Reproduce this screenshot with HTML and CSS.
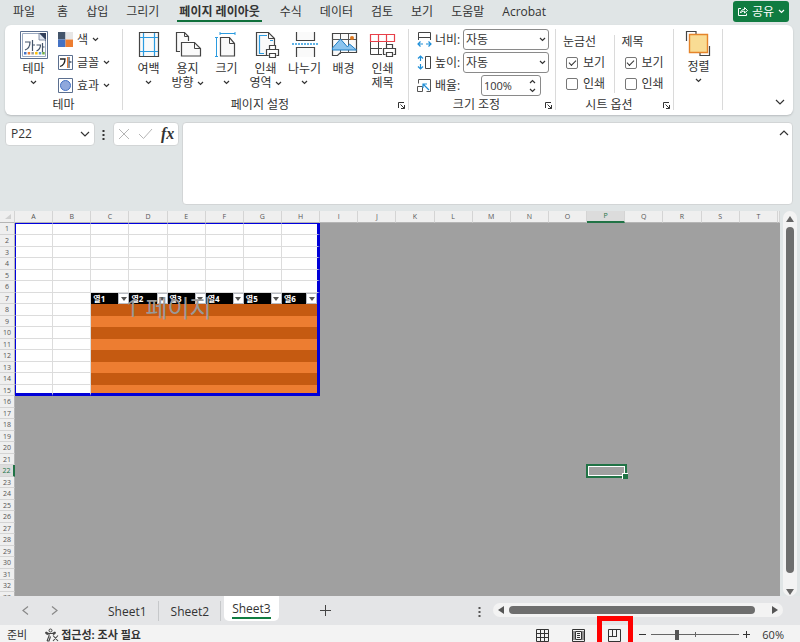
FILE: index.html
```html
<!DOCTYPE html>
<html lang="ko">
<head>
<meta charset="utf-8">
<title>Sheet3</title>
<link rel="stylesheet" href="styles.css">
</head>
<body>
<svg class="sprite" aria-hidden="true">
  <symbol id="chev" viewBox="0 0 7 5"><path d="M1 1l2.500 2.500L6 1" fill="none" stroke="#333" stroke-width="1.200"/></symbol>
  <symbol id="chev-lg" viewBox="0 0 10 7"><path d="M1 1l4 4 4-4" fill="none" stroke="#333" stroke-width="1.200"/></symbol>
  <symbol id="launch" viewBox="0 0 9 9"><path d="M1.500 7V1.500H7M3.500 3.500l4 4M7.500 4v3.500H4" fill="none" stroke="#333"/></symbol>
  <symbol id="printer" viewBox="0 0 15 15"><path d="M4.500 5V1.500h6V5M3.500 11.500h-2v-6h12v6h-2M4.500 9.500h6v4h-6z" fill="#fff" stroke="#444" stroke-width="1.200"/></symbol>
</svg>

<nav class="menu">
  <a class="first" href="#">파일</a><a href="#">홈</a><a href="#">삽입</a><a href="#">그리기</a><a class="active" href="#">페이지 레이아웃</a><a href="#">수식</a><a href="#">데이터</a><a href="#">검토</a><a href="#">보기</a><a href="#">도움말</a><a href="#">Acrobat</a>
  <button class="share" type="button">
    <svg width="11" height="11" viewBox="0 0 11 11"><path d="M4 2.500H1.500v7h8V7.500M3.500 7c.3-2.500 1.800-3.500 4-3.500V1.500l3 3-3 2.500V5.200C5.500 5.200 4.500 5.700 3.500 7z" fill="none" stroke="#fff"/></svg>
    공유
    <svg width="7" height="5" viewBox="0 0 7 5"><path d="M1 1l2.500 2.500L6 1" fill="none" stroke="#fff" stroke-width="1.200"/></svg>
  </button>
</nav>

<section class="ribbon">
  <div class="group g-theme">
    <div class="body">
      <button class="big" type="button">
        <svg width="28" height="28" viewBox="0 0 28 28">
          <path d="M.5.5h27v27H.5z" fill="#fff" stroke="#5b6f8f"/><path d="M2.500 2.500h23v23h-23z" fill="#fff" stroke="#9aa9c0"/>
          <path d="M19 2h7v8z" fill="#33415c"/><path d="M19 2v7h7z" fill="#dfe5ee" stroke="#6a7a95" stroke-width=".8"/>
          <path d="M5 11h5c0 4-2 7-5 8M12.500 9v11M12.500 14h2.500M16.500 14h4c0 3-1.500 5-4 6M22.500 12v9M22.500 16h2" fill="none" stroke="#44546a" stroke-width="1.200"/>
          <path d="M4 21h2.500v2.500H4z" fill="#4472c4"/><path d="M7.700 21h2.500v2.500H7.700z" fill="#ed7d31"/><path d="M11.400 21h2.500v2.500h-2.500z" fill="#999"/><path d="M15.100 21h2.500v2.500h-2.500z" fill="#ffc000"/><path d="M18.800 21h2.500v2.500h-2.500z" fill="#5b9bd5"/><path d="M22.200 21h2.500v2.500h-2.500z" fill="#70ad47"/>
        </svg>
        <span>테마</span><svg class="chev"><use href="#chev"/></svg>
      </button>
      <div class="rows">
        <button type="button"><svg width="15" height="15" viewBox="0 0 15 15"><path d="M0 0h7.500v7.500H0z" fill="#44546a"/><path d="M7.500 0H15v7.500H7.500z" fill="#e7e6e6"/><path d="M0 7.500h7.500V15H0z" fill="#4472c4"/><path d="M7.500 7.500H15V15H7.500z" fill="#ed7d31"/></svg>색<svg class="chev"><use href="#chev"/></svg></button>
        <button type="button"><svg width="15" height="15" viewBox="0 0 15 15"><path d="M.5.5h14v14H.5z" fill="#fff" stroke="#5b6f8f"/><path d="M2 4h5c0 4-2 6.500-5 7.500" fill="none" stroke="#222" stroke-width="1.300"/><path d="M9.500 2v11" stroke="#ed7d31"/><path d="M11 2v11M11 7h2.500" fill="none" stroke="#44546a" stroke-width="1.300"/></svg>글꼴<svg class="chev"><use href="#chev"/></svg></button>
        <button type="button"><svg width="15" height="15" viewBox="0 0 15 15"><path d="M.5.5h14v14H.5z" fill="#fff" stroke="#5b6f8f"/><circle cx="7.500" cy="7.500" r="5" fill="#8fa8dc" stroke="#4472c4"/></svg>효과<svg class="chev"><use href="#chev"/></svg></button>
      </div>
    </div>
    <footer><span>테마</span></footer>
  </div>

  <div class="group g-page">
    <div class="body">
      <button class="big" type="button">
        <svg width="28" height="28" viewBox="0 0 28 28"><path d="M4.500 1.500h19v24h-19z" fill="#fafafa" stroke="#444" stroke-width="1.200"/><path d="M8.500 2v23M19.500 2v23M5 6.500h18M5 20.500h18" stroke="#2b9be0" stroke-width="1.200"/></svg>
        <span>여백</span><svg class="chev"><use href="#chev"/></svg></button>
      <button class="big" type="button">
        <svg width="28" height="28" viewBox="0 0 28 28"><path d="M6 20.500H2.500v-19h8l4 4V10" fill="#fafafa" stroke="#444" stroke-width="1.200"/><path d="M10.500 1.500v4h4" fill="none" stroke="#444"/><path d="M7.500 11.500h13l6 6v7.500h-19z" fill="#fafafa" stroke="#444" stroke-width="1.200"/><path d="M20.500 11.500v6h6" fill="none" stroke="#444"/></svg>
        <span>용지<br>방향 <svg class="chev"><use href="#chev"/></svg></span></button>
      <button class="big" type="button">
        <svg width="28" height="28" viewBox="0 0 28 28"><path d="M7.500 6.500h9l5 6v12.500h-14z" fill="#fafafa" stroke="#444" stroke-width="1.200"/><path d="M16.500 6.500v6h5" fill="none" stroke="#444"/><path d="M7 2.500h15M7 1v3M22 1v3M3.500 6.500v19M2 6.500h3M2 25.500h3" stroke="#2b9be0"/></svg>
        <span>크기</span><svg class="chev"><use href="#chev"/></svg></button>
      <button class="big" type="button">
        <svg width="28" height="28" viewBox="0 0 28 28"><path d="M4.500 1.500h12l6 6v17h-18z" fill="#fafafa" stroke="#444" stroke-width="1.200"/><path d="M15 4.500H7.500v18H12M18 9.500h3" fill="none" stroke="#2b9be0" stroke-width="1.200"/><path d="M16.500 1.500v6h6" fill="none" stroke="#444"/><use href="#printer" x="13" y="13" width="15" height="15"/></svg>
        <span>인쇄<br>영역 <svg class="chev"><use href="#chev"/></svg></span></button>
      <button class="big" type="button">
        <svg width="28" height="28" viewBox="0 0 28 28"><path d="M5.500 1v8.500h18V1M5.500 26v-9.500h18V26" fill="#fafafa" stroke="#444" stroke-width="1.200"/><path d="M1 13h26" stroke="#2b9be0" stroke-width="1.500" stroke-dasharray="2 1"/></svg>
        <span>나누기</span><svg class="chev"><use href="#chev"/></svg></button>
      <button class="big" type="button">
        <svg width="28" height="28" viewBox="0 0 28 28"><path d="M2.500 2.500h24v19h-16l-3 3h-5z" fill="#fafafa" stroke="#444" stroke-width="1.200"/><path d="M2 8.500h24M10.500 3v20M18.500 3v19" stroke="#555"/><path d="M2.500 19v-2l8-9 7 8 2-3 7 6z" fill="#8cc4ee" stroke="#1f7ec4"/><circle cx="22" cy="7" r="2" fill="#e07a1f"/></svg>
        <span>배경</span></button>
      <button class="big" type="button">
        <svg width="28" height="28" viewBox="0 0 28 28"><path d="M1.500 10v13.500H13M9.500 10v13M17.500 10v4M1.500 17.500H13" fill="none" stroke="#444"/><path d="M1.500 3.500h24v7h-24zM9.500 3.500v7M17.500 3.500v7" fill="#fff" stroke="#e8404a" stroke-width="1.200"/><use href="#printer" x="13" y="12" width="15" height="15"/></svg>
        <span>인쇄<br>제목</span></button>
    </div>
    <footer><span>페이지 설정</span><button type="button" aria-label="페이지 설정"><svg width="9" height="9"><use href="#launch"/></svg></button></footer>
  </div>

  <div class="group g-scale">
    <div class="body fields">
      <label for="w"><svg width="15" height="15" viewBox="0 0 15 15"><path d="M1.500 5.500v-5h12v5zM1.500 5v3M13.500 5v3" fill="none" stroke="#444"/><path d="M1 12h5M9 12h5M3.500 9.500L1 12l2.500 2.500M11.500 9.500L14 12l-2.500 2.500" fill="none" stroke="#1f8fd8" stroke-width="1.200"/></svg>너비:</label>
      <span class="select"><select id="w"><option>자동</option></select><svg class="chev"><use href="#chev"/></svg></span>
      <label for="h"><svg width="15" height="15" viewBox="0 0 15 15"><path d="M8.500 1.500h5v12h-5z" fill="none" stroke="#444"/><path d="M3.500 1v5M3.500 9v5M1 3.500L3.500 1 6 3.500M1 11.500L3.500 14 6 11.500" fill="none" stroke="#1f8fd8" stroke-width="1.200"/></svg>높이:</label>
      <span class="select"><select id="h"><option>자동</option></select><svg class="chev"><use href="#chev"/></svg></span>
      <label for="s"><svg width="15" height="15" viewBox="0 0 15 15"><path d="M1.500 5.500v-4h12v12h-4M.500 8.500h5v5h-5z" fill="none" stroke="#555"/><path d="M12 12L6 6M6 10V6h4" fill="none" stroke="#1f8fd8" stroke-width="1.200"/></svg>배율:</label>
      <span class="spin"><input id="s" type="text" value="100%"><svg width="7" height="14" viewBox="0 0 7 14"><path d="M1 4l2.500-2.500L6 4M1 10l2.500 2.500L6 10" fill="none" stroke="#333" stroke-width="1.200"/></svg></span>
    </div>
    <footer><span>크기 조정</span><button type="button" aria-label="크기 조정"><svg width="9" height="9"><use href="#launch"/></svg></button></footer>
  </div>

  <div class="group g-sheet">
    <div class="body">
      <div class="checks"><span>눈금선</span><label><input type="checkbox" checked>보기</label><label><input type="checkbox">인쇄</label></div>
      <div class="checks"><span>제목</span><label><input type="checkbox" checked>보기</label><label><input type="checkbox">인쇄</label></div>
    </div>
    <footer><span>시트 옵션</span><button type="button" aria-label="시트 옵션"><svg width="9" height="9"><use href="#launch"/></svg></button></footer>
  </div>

  <div class="group g-arrange">
    <div class="body">
      <button class="big" type="button">
        <svg width="28" height="28" viewBox="0 0 28 28"><path d="M1.500 12V2.500H11V5M24.500 17v9.500H15V24" fill="none" stroke="#444" stroke-width="1.200"/><path d="M4.500 5.500h18v18h-18z" fill="#f9dc94" stroke="#e5842a" stroke-width="1.400"/></svg>
        <span>정렬</span><svg class="chev"><use href="#chev"/></svg></button>
    </div>
  </div>
  <button class="collapse" type="button" aria-label="리본 축소"><svg width="10" height="7"><use href="#chev-lg"/></svg></button>
</section>

<section class="formula">
  <div class="namebox"><input type="text" value="P22" aria-label="이름 상자"><svg width="10" height="7"><use href="#chev-lg"/></svg></div>
  <svg class="dots" width="3" height="11" viewBox="0 0 3 11"><path d="M.5 1h2v2h-2zM.5 5h2v2h-2zM.5 9h2v2h-2z" fill="#333"/></svg>
  <div class="fx">
    <button type="button" aria-label="취소"><svg width="12" height="12" viewBox="0 0 12 12"><path d="M1 1l10 10M11 1L1 11" stroke="#b5b5b5"/></svg></button>
    <button type="button" aria-label="입력"><svg width="15" height="12" viewBox="0 0 15 12"><path d="M1 6l4.500 4.500L14 1" fill="none" stroke="#b5b5b5"/></svg></button>
    <button class="fn" type="button">fx</button>
  </div>
  <div class="entry"><textarea aria-label="수식 입력줄"></textarea><svg width="10" height="7" viewBox="0 0 10 7"><path d="M1 6l4-4 4 4" fill="none" stroke="#333" stroke-width="1.200"/></svg></div>
</section>

<main class="workspace">
  <div class="sheet">
    <table>
      <colgroup><col class="c-head"></colgroup><colgroup id="cols"></colgroup><colgroup><col class="c-tail"></colgroup>
      <thead id="head"></thead>
      <tbody id="grid"></tbody>
    </table>
  </div>
  <div class="vscroll">
    <svg width="8" height="6" viewBox="0 0 8 6"><path d="M4 0l4 6H0z" fill="#666"/></svg>
    <i></i>
    <svg class="down" width="8" height="6" viewBox="0 0 8 6"><path d="M4 6l4-6H0z" fill="#666"/></svg>
  </div>
</main>

<section class="tabs">
  <button class="arrow" type="button" aria-label="이전"><svg width="7" height="9" viewBox="0 0 7 9"><path d="M6 .500l-5 4 5 4" fill="none" stroke="#888" stroke-width="1.200"/></svg></button>
  <button class="arrow" type="button" aria-label="다음"><svg width="7" height="9" viewBox="0 0 7 9"><path d="M1 .500l5 4-5 4" fill="none" stroke="#888" stroke-width="1.200"/></svg></button>
  <div class="list">
    <button type="button">Sheet1</button><button type="button">Sheet2</button><button class="on" type="button"><span>Sheet3</span></button>
  </div>
  <button class="add" type="button" aria-label="새 시트"><svg width="11" height="11" viewBox="0 0 11 11"><path d="M5.500 0v11M0 5.500h11" stroke="#444"/></svg></button>
  <svg class="dots" width="3" height="11" viewBox="0 0 3 11"><path d="M.5 1h2v2h-2zM.5 5h2v2h-2zM.5 9h2v2h-2z" fill="#555"/></svg>
  <div class="hscroll">
    <svg width="6" height="8" viewBox="0 0 6 8"><path d="M0 4l6-4v8z" fill="#555"/></svg>
    <i></i>
    <svg width="6" height="8" viewBox="0 0 6 8"><path d="M6 4L0 0v8z" fill="#555"/></svg>
  </div>
</section>

<footer class="status">
  <span class="ready">준비</span>
  <svg width="14" height="14" viewBox="0 0 14 14"><circle cx="5.500" cy="2.500" r="1.500" fill="none" stroke="#444"/><path d="M1 4c2 1.500 2.500 1.500 3 1.500V8L2 13M1 4c-.8 1 0 1.800 2 2.500M10 4C8 5.500 7.500 5.500 7 5.500h-3M10 4c.8 1 0 1.800-2 2.500M5.500 8.500L4 13H2M8 7.500l5 5.500M13 7.500L8 13" fill="none" stroke="#444" stroke-width="1.100"/></svg>
  <span class="access">접근성: 조사 필요</span>
  <div class="views">
    <button type="button" aria-label="기본"><svg width="13" height="13" viewBox="0 0 13 13"><path d="M.5.500h12v12H.5zM4.500 0v13M8.500 0v13M0 4.500h13M0 8.500h13" fill="none" stroke="#333"/></svg></button>
    <button type="button" aria-label="페이지 레이아웃"><svg width="13" height="13" viewBox="0 0 13 13"><path d="M.5.500h12v12H.5zM3.500 2.500h6v8h-6zM5 4.500h3M5 6.500h3M5 8.500h3M2 2v9M11 2v9" fill="none" stroke="#333"/></svg></button>
    <button class="marked" type="button" aria-label="페이지 나누기 미리 보기"><svg width="13" height="13" viewBox="0 0 13 13"><path d="M.5.500h12v12H.5zM4.500 1v6M8.500 1v6M0 7.500h9" fill="none" stroke="#333"/></svg></button>
  </div>
  <button type="button" aria-label="축소"><svg width="7" height="7" viewBox="0 0 7 7"><path d="M0 3.500h7" stroke="#333"/></svg></button>
  <input class="zoom" type="range" min="0" max="100" value="28" aria-label="확대/축소">
  <button type="button" aria-label="확대"><svg width="7" height="7" viewBox="0 0 7 7"><path d="M0 3.500h7M3.500 0v7" stroke="#333"/></svg></button>
  <span class="percent">60%</span>
</footer>
<script src="sheet.js"></script>
</body>
</html>
```
FILE: styles.css
```css
*, *::before, *::after { box-sizing: border-box; }
body {
  margin: 0;
  height: 100vh;
  display: flex;
  flex-direction: column;
  overflow: hidden;
  background: #e0e5e6;
  color: #333;
  font-family: "Open Sans", "Noto Sans CJK KR", sans-serif;
  font-size: 12px;
  line-height: 14px;
}
button, input, select, textarea {
  margin: 0;
  padding: 0;
  border: 0;
  background: none;
  color: inherit;
  font: inherit;
  appearance: none;
  outline: none;
}
svg { display: block; flex: none; }
.sprite { position: absolute; width: 0; height: 0; }
.chev { width: 7px; height: 5px; }

/* Menu */
.menu { display: flex; gap: 18px; align-items: flex-start; height: 25px; padding: 1px 11px 0 13px; }
.menu a { height: 21px; padding-top: 4px; color: #333; text-decoration: none; white-space: nowrap; }
.menu .first { margin-right: 4px; }
.menu .active { padding: 4px 2px 0; font-weight: 700; border-bottom: 2px solid #0f703b; }
.share {
  display: flex; align-items: center; gap: 4px;
  height: 21px; margin-left: auto; padding: 0 4px;
  border-radius: 3px; background: #107c41; color: #fff; white-space: nowrap;
}

/* Ribbon */
.ribbon {
  display: flex; height: 90px; margin: 0 7px 0 5px; padding-top: 4px;
  border-radius: 6px; background: #fff; box-shadow: 0 1px 2px #b8bcbe;
  flex: none;
}
.group { display: flex; flex-direction: column; height: 81px; border-right: 1px solid #dadada; }
.body { display: flex; flex: 1; }
.group footer { display: flex; align-items: center; height: 14px; margin-bottom: -2px; }
.group footer span { flex: 1; text-align: center; }
.group footer button { margin-right: 2px; }
.big { display: flex; flex-direction: column; align-items: center; width: 39px; padding-top: 2px; line-height: 14px; }
.big > span { margin-top: 3px; white-space: nowrap; }
.big > .chev { margin-top: 4px; }
.big span .chev { display: inline-block; vertical-align: middle; }
.g-theme { width: 118px; }
.g-theme .body { padding-left: 9px; gap: 5px; }
.rows button { display: flex; align-items: center; gap: 4px; height: 23px; }
.rows { margin-top: -1px; }
.g-page { width: 286px; }
.g-page .body { padding-left: 6px; }
.g-scale { width: 147px; }
.fields { display: grid; grid-template-columns: 46px 1fr; grid-auto-rows: 21px; gap: 2px 0; padding: 0 6px 0 8px; align-content: start; }
.fields label { display: flex; align-items: center; gap: 3px; white-space: nowrap; }
.select, .spin { display: flex; align-items: center; border: 1px solid #8a8a8a; border-radius: 3px; padding: 0 2px; background: #fff; }
.select select { flex: 1; min-width: 0; }
.spin { margin: 0 8px 0 18px; font-size: 11px; }
.spin input { width: 100%; min-width: 0; }
.spin svg { margin-right: 2px; }
.g-sheet { width: 118px; }
.checks { display: flex; flex-direction: column; gap: 7px; width: 59px; height: 58px; margin-top: 6px; padding-left: 7px; }
.checks:first-child { border-right: 1px solid #dadada; }
.checks label { display: flex; align-items: center; gap: 5px; padding-left: 3px; white-space: nowrap; }
.checks input { width: 12px; height: 12px; border: 1px solid #777; border-radius: 2px; display: grid; place-items: center; }
.checks input:checked::before { content: ""; width: 7px; height: 4px; margin-bottom: 2px; border: solid #333; border-width: 0 0 1px 1px; transform: rotate(-45deg); }
.g-arrange { width: 49px; }
.g-arrange .body { padding-left: 5px; }
.g-arrange .big { padding-top: 0; }
.collapse { margin: auto 8px 9px auto; }

/* Formula bar */
.formula { display: flex; align-items: flex-start; height: 83px; margin: 7px 7px 6px 5px; flex: none; }
.namebox, .fx { display: flex; align-items: center; height: 24px; border: 1px solid #d2d5d6; border-radius: 4px; background: #fff; }
.namebox { width: 90px; padding: 0 4px 0 5px; }
.namebox input { flex: 1; min-width: 0; }
.formula .dots { margin: 7px 8px 0 7px; }
.fx { width: 66px; padding: 0 4px; gap: 8px; margin-right: 3px; }
.fn { font: italic 700 16px/18px "Liberation Serif", serif; }
.entry { display: flex; flex: 1; height: 83px; padding: 6px 3px 0 5px; border: 1px solid #d2d5d6; border-radius: 4px; background: #fff; }
.entry textarea { flex: 1; resize: none; }

/* Worksheet */
.workspace { display: flex; flex: 1; min-height: 0; }
.sheet { flex: 1; overflow: hidden; background: #a0a0a0; }
table { width: 100%; table-layout: fixed; border-collapse: separate; border-spacing: 0; font-size: 7px; line-height: 10px; }
th, td { padding: 0; }
tr { height: 11px; }
tbody tr:nth-child(even), tbody tr:first-child { height: 12px; }
.c-head { width: 15px; }
.c-tail { width: 2px; }
thead tr { height: 12px; }
thead th { background: #efefef; border-right: 1px solid #d4d4d4; border-bottom: 1px solid #b5b5b5; color: #555; font-weight: 400; }
thead .current { background: #dcdcdc; border-bottom: 2px solid #217346; color: #217346; }
.corner svg { margin: 0 3px 0 auto; }
tbody th { background: #efefef; border-right: 1px solid #b5b5b5; border-bottom: 1px solid #d4d4d4; color: #555; font-weight: 400; line-height: 9px; }
tbody .current { border-right: 2px solid #217346; background: #dcdcdc; color: #217346; }
td { position: relative; }
.print { background: #fff; border-right: 1px solid #dcdcdc; border-bottom: 1px solid #dcdcdc; }
.light { background: #ed7d31; border: 0; }
.dark { background: #c55a11; border: 0; }
.title { background: #000; color: #fff; font-weight: 700; font-size: 8px; line-height: 10px; border: 0; }
.title div { display: flex; justify-content: space-between; align-items: center; height: 11px; padding-left: 2px; white-space: nowrap; }
.title button { display: grid; place-items: center; width: 11px; height: 11px; border: 1px solid #b8bcc4; background: #fff; }
.edge-left { border-left: 1px solid #0000e0; }
.edge-top { border-top: 1px solid #0000e0; }
.edge-right { border-right: 3px solid #0000d8; }
.edge-bottom { border-bottom: 3px solid #0000d8; }
.watermark { position: absolute; z-index: 1; left: -4px; top: 3px; color: #999; font-size: 24px; font-weight: 400; line-height: 24px; white-space: nowrap; pointer-events: none; }
.selection { position: absolute; inset: -1px -2px -1px -1px; border: 2px solid #217346; box-shadow: inset 0 0 0 1px #fff; }
.selection::after { content: ""; position: absolute; right: -3px; bottom: -3px; width: 6px; height: 6px; background: #217346; border: solid #fff; border-width: 1px 0 0 1px; }
.vscroll { display: flex; flex-direction: column; align-items: center; gap: 5px; width: 14px; margin: 0 3px 0 3px; padding: 5px 0 1px; border-radius: 7px; background: #f3f3f3; }
.vscroll i { width: 8px; flex: 1; border-radius: 4px; background: #6e6e6e; }
.vscroll .down { margin-top: 11px; }

/* Sheet tabs */
.tabs { display: flex; align-items: flex-start; height: 29px; padding-right: 17px; background: #e4e5e7; flex: none; }
.tabs .arrow { margin: 10px 0 0 22px; }
.list { display: flex; margin-left: 39px; }
.list button { height: 20px; margin-top: 5px; padding: 4px 11px 2px 12px; border-right: 1px solid #c6c8ca; }
.list button:first-child { padding-left: 11px; }
.list .on { height: 25px; margin: 0 3px; padding: 6px 8px 2px; border: 0; border-radius: 0 0 5px 5px; background: #fff; }
.on span { display: block; height: 17px; border-bottom: 2px solid #107c41; }
.add { margin: 9px 0 0 38px; }
.tabs .dots { margin: 10px 12px 0 auto; }
.hscroll { display: flex; align-items: center; gap: 5px; width: 37%; height: 14px; margin-top: 7px; padding: 0 5px; border-radius: 7px; background: #f3f3f3; }
.hscroll i { flex: 1; height: 8px; border-radius: 4px; background: #6e6e6e; margin-right: 12px; }

/* Status bar */
.status { display: flex; align-items: center; height: 17px; padding: 2px 16px 0 7px; background: #f3f3f3; font-size: 11px; white-space: nowrap; flex: none; }
.ready { margin-right: 18px; }
.access { margin-left: 2px; font-weight: 700; }
.views { display: flex; gap: 23px; margin: 2px 18px 0 auto; }
.marked { position: relative; }
.marked::after { content: ""; position: absolute; left: -11px; top: -13px; width: 36px; height: 31px; border: 5px solid #f00; }
.zoom {
  width: 88px; height: 12px; margin: 0 4px 0 5px;
  background: linear-gradient(#666, #666) center / 100% 1px no-repeat, linear-gradient(#666, #666) center / 1px 5px no-repeat;
}
.zoom::-webkit-slider-thumb { appearance: none; width: 4px; height: 10px; background: #555; }
.percent { margin-left: 12px; }
```
FILE: sheet.js
```javascript
const letters = "ABCDEFGHIJKLMNOPQRST".split("");
const rowCount = 33;
const print = { lastCol: 7, lastRow: 15 };
const list = { firstCol: 2, headRow: 7 };
const active = { col: 15, row: 22 };

document.getElementById("cols").innerHTML = letters.map(() => "<col>").join("");

const corner = '<th class="corner"><svg width="6" height="5" viewBox="0 0 6 5"><path d="M6 0v5H0z" fill="#d0d0d0"/></svg></th>';
document.getElementById("head").innerHTML = "<tr>" + corner +
  letters.map((l, c) => `<th class="${c === active.col ? "current" : ""}">${l}</th>`).join("") + "<th></th></tr>";

const filter = '<button type="button" aria-label="필터"><svg width="6" height="4" viewBox="0 0 6 4"><path d="M0 0h6L3 4z" fill="#555"/></svg></button>';

function cell(row, col) {
  const classes = [];
  let content = "";
  if (row <= print.lastRow && col <= print.lastCol) {
    classes.push("print");
    if (col >= list.firstCol && row >= list.headRow) {
      if (row === list.headRow) {
        classes.push("title");
        content = `<div>열${col - list.firstCol + 1}${filter}</div>`;
        if (col === 3) content += '<span class="watermark">1 페이지</span>';
      } else {
        classes.push(row % 2 ? "light" : "dark");
      }
    }
    if (col === 0) classes.push("edge-left");
    if (row === 1) classes.push("edge-top");
    if (col === print.lastCol) classes.push("edge-right");
    if (row === print.lastRow) classes.push("edge-bottom");
  }
  if (row === active.row && col === active.col) content = '<span class="selection"></span>';
  return `<td class="${classes.join(" ")}">${content}</td>`;
}

let rows = "";
for (let r = 1; r <= rowCount; r++) {
  rows += `<tr><th class="${r === active.row ? "current" : ""}">${r}</th>` +
    letters.map((_, c) => cell(r, c)).join("") + "<td></td></tr>";
}
document.getElementById("grid").innerHTML = rows;
```
